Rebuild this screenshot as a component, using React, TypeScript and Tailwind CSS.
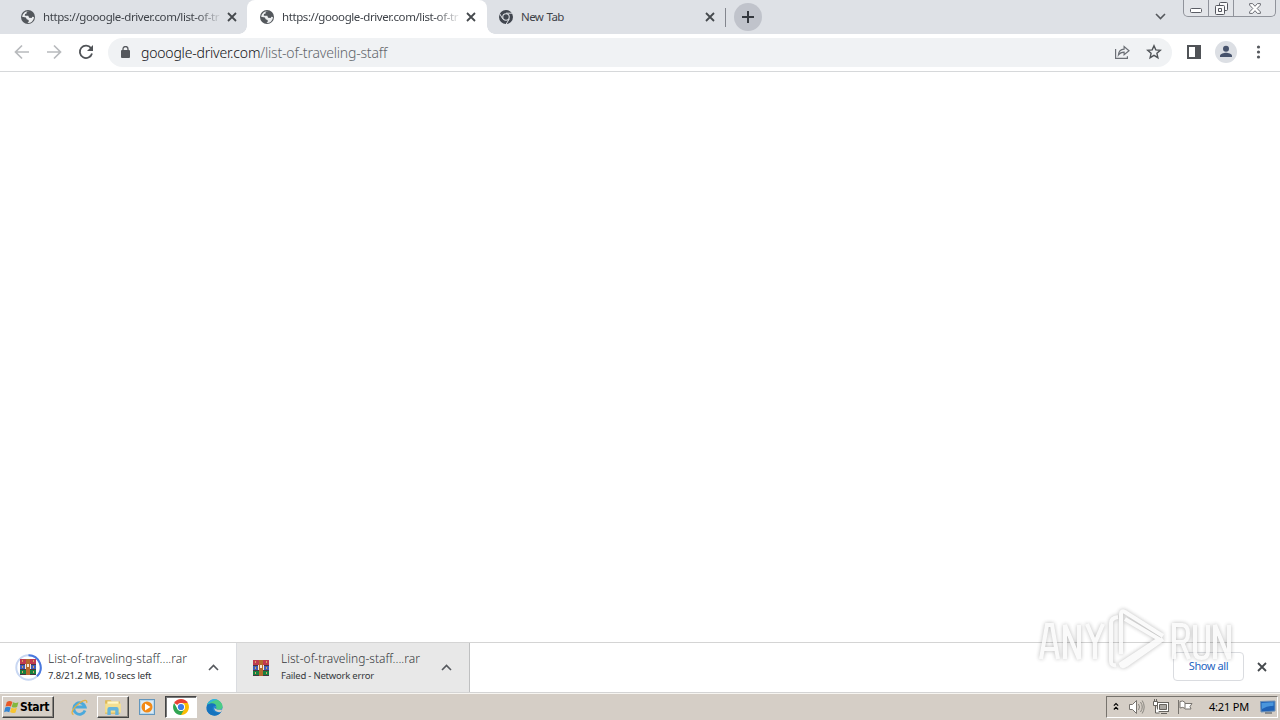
import React from 'react';

const uiFont = 'font-[Tahoma,"Noto_Sans",sans-serif]';

function Globe() {
  return (
    <svg className="size-4 shrink-0" viewBox="0 0 16 16">
      <circle cx="8" cy="8" r="7" fill="#53575c" />
      <path d="M9.2 2.3 6.7 2.7 6.6 4.4 5 5.1 4.8 6.7 8.3 6.8 9.1 8.7 11.7 9 12.3 7.8 14 7.9A6 6 0 0 1 7.5 14L8.8 12.5 8.6 10.9 6.7 10.2 5.9 8.4 2.1 7.7A6 6 0 0 1 9.2 2.3Z" fill="#eceef0" />
    </svg>
  );
}

function Close({ className = 'size-[10px]' }: { className?: string }) {
  return (
    <svg className={`${className} shrink-0`} viewBox="0 0 10 10" fill="none" stroke="#45494d" strokeWidth="1.8">
      <path d="m1 1 8 8M9 1 1 9" />
    </svg>
  );
}

function ChromeMono() {
  return (
    <svg className="size-4 shrink-0" viewBox="0 0 16 16" fill="none">
      <circle cx="8" cy="8" r="5.4" stroke="#41464f" strokeWidth="3.2" />
      <circle cx="8" cy="8" r="2.7" fill="#41464f" />
      <path d="M8 4.2h6.4M4.7 9.9 1.5 4.4M11.3 9.9 8 15.4" stroke="#dee1e6" strokeWidth="1" />
    </svg>
  );
}

function ChromeColor() {
  return (
    <svg className="size-4" viewBox="0 0 16 16">
      <path d="M8 8 1.1 4A8 8 0 0 1 14.9 4Z" fill="#e94235" />
      <path d="M8 8V4h6.9A8 8 0 0 1 8 16Z" fill="#fbbc04" />
      <path d="M8 16A8 8 0 0 1 1.1 4L4.5 10 8 12l3.4-2Z" fill="#31a552" />
      <circle cx="8" cy="8" r="4" fill="#fff" />
      <circle cx="8" cy="8" r="3.1" fill="#3d7ce8" />
    </svg>
  );
}

function Rar({ className = 'size-4' }: { className?: string }) {
  return (
    <svg className={className} viewBox="0 0 16 16" shapeRendering="crispEdges">
      <path d="M0 0h16v5H0z" fill="#c03a50" />
      <path d="M0 5h16v6H0z" fill="#405dbb" />
      <path d="M0 11h16v5H0z" fill="#16803f" />
      <path d="M0 5h16v1H0zM0 10h16v1H0zM0 15h16v1H0z" fill="#4a3440" />
      <path d="M6 0h4v16H6z" fill="#b5692d" />
      <path d="M2 1h1v2H2zM2 7h1v2H2zM2 12h1v2H2zM13 1h1v2h-1zM13 7h1v2h-1zM13 12h1v2h-1z" fill="#d9a55b" />
      <path d="M5 5h1v5H5zM10 5h1v5h-1zM7 5h2v3H7z" fill="#f5e8d4" />
    </svg>
  );
}

function Tab({ active }: { active?: boolean }) {
  return (
    <div className={`flex h-[34px] items-center pl-[12px] ${active ? 'relative w-[240px] rounded-t-lg bg-white before:absolute before:-left-2 before:bottom-0 before:size-2 before:bg-[radial-gradient(circle_at_0_0,#dee1e6_7.5px,#fff_8px)] after:absolute after:-right-2 after:bottom-0 after:size-2 after:bg-[radial-gradient(circle_at_100%_0,#dee1e6_7.5px,#fff_8px)]' : 'ml-[8px] w-[239px]'}`}>
      <Globe />
      <span className="ml-[7px] w-[178px] whitespace-nowrap text-[11.5px] tracking-[-0.41px] text-[#3f4349] [mask-image:linear-gradient(to_right,#000_86%,transparent_101%)]">https://gooogle-driver.com/list-of-tr</span>
      <Close className="ml-[6px] size-[10px]" />
    </div>
  );
}

function Window() {
  return (
    <div className="flex h-[17px] w-[93px] rounded-b-[5px] border border-t-0 border-[#90939b] bg-[#e3e5e9]">
      <div className="flex w-[25px] items-center justify-center border-r border-[#90939b]">
        <svg className="mt-[4px] h-[5px] w-3" viewBox="0 0 12 5"><rect x=".5" y=".5" width="11" height="4" rx="1" fill="#fff" stroke="#5b5d65" /></svg>
      </div>
      <div className="flex w-[25px] items-center justify-center border-r border-[#90939b]">
        <svg className="size-[13px]" viewBox="0 0 13 13" fill="#f9f9fa" stroke="#54565e"><rect x="4.5" y=".5" width="8" height="8" rx="1" /><rect x=".5" y="3.5" width="9" height="9" rx="1" /><path d="M3.5 6.5h3v3h-3z" /></svg>
      </div>
      <div className="flex flex-1 items-center justify-center">
        <svg className="h-[11px] w-3" viewBox="0 0 12 11"><path d="M.6.6h3L6 3.3 8.4.6h3v1.5L8.2 5.5l3.2 3.4v1.5h-3L6 7.7l-2.4 2.7h-3V8.9l3.2-3.4L.6 2.1Z" fill="#fff" stroke="#6b6d74" /></svg>
      </div>
    </div>
  );
}

function Chevron({ down }: { down?: boolean }) {
  return (
    <svg className="h-[7px] w-[11px] shrink-0" viewBox="0 0 11 7" fill="none" stroke="#55585d" strokeWidth="1.6">
      {down ? <path d="m1 1 4.5 4.5L10 1" /> : <path d="m1 6 4.5-4.5L10 6" />}
    </svg>
  );
}

function Toolbar() {
  return (
    <div className="flex h-[38px] items-center border-b border-[#d6d8da] bg-white">
      <svg className="mb-px ml-[14px] size-4" viewBox="0 0 16 16" fill="none" stroke="#b8babd" strokeWidth="1.7"><path d="M15 8H2M8 1.5 1.5 8 8 14.5" /></svg>
      <svg className="mb-px ml-[16px] size-4" viewBox="0 0 16 16" fill="none" stroke="#b8babd" strokeWidth="1.7"><path d="M1 8h13M8 1.5 14.5 8 8 14.5" /></svg>
      <svg className="mb-px ml-[16px] size-4" viewBox="0 0 16 16"><path d="M13 4.1A6.2 6.2 0 1 0 14 9.5" fill="none" stroke="#505357" strokeWidth="1.8" /><path d="M15 1v6H9Z" fill="#505357" /></svg>
      <div className="ml-[14px] flex h-[29px] w-[1064px] items-center rounded-full bg-[#f0f2f4] pl-[13px] pr-[10px]">
        <svg className="mb-[2px] h-3 w-[9px]" viewBox="0 0 9 12"><rect y="4" width="9" height="8" rx="1" fill="#55585d" /><path d="M2 5V3a2.5 2.5 0 0 1 5 0v2" fill="none" stroke="#55585d" strokeWidth="1.3" /></svg>
        <div className="ml-[11px] flex-1 whitespace-nowrap text-[14px] font-light tracking-[-0.19px] text-[#62666b]"><span className="text-[#101114]">gooogle-driver.com</span>/list-of-traveling-staff</div>
        <svg className="mb-px size-4" viewBox="0 0 16 16" fill="none" stroke="#6c7076" strokeWidth="1.2"><path d="M1.6 5v9.4h11.8v-2.2M4.4 11c.3-4 2.3-5.7 5.7-5.8V2.5L15 6.8l-4.9 4V8.2C7.5 8.2 5.8 9 4.4 11Z" /></svg>
        <svg className="mb-px ml-[16px] size-4" viewBox="0 0 16 16" fill="none" stroke="#505458" strokeWidth="1.4"><path d="m8 1.8 1.8 4.1 4.5.4-3.4 3 1 4.4L8 11.4l-3.9 2.3 1-4.4-3.4-3 4.5-.4Z" /></svg>
      </div>
      <svg className="mb-px ml-[15px] h-[14px] w-[14px]" viewBox="0 0 14 14"><path d="M0 0h14v14H0zM2 2v10h6V2z" fillRule="evenodd" fill="#505357" /></svg>
      <svg className="mb-px ml-[14px] size-[22px]" viewBox="0 0 22 22"><circle cx="11" cy="11" r="11" fill="#dcdfe4" /><circle cx="11" cy="7.8" r="3" fill="#47536c" /><path d="M5 16v-1.3c0-2 4-3 6-3s6 1 6 3V16Z" fill="#47536c" /></svg>
      <svg className="mb-px ml-[19px] h-4 w-[5px]" viewBox="0 0 5 16" fill="#55585d"><circle cx="2.5" cy="3" r="1.6" /><circle cx="2.5" cy="8" r="1.6" /><circle cx="2.5" cy="13" r="1.6" /></svg>
    </div>
  );
}

function Watermark() {
  return (
    <svg className="absolute left-[1037px] top-[607px] h-[70px] w-[204px] opacity-85 drop-shadow-[0_0_2px_rgba(0,0,0,.32)]" viewBox="0 0 204 70" fill="none" stroke="#fafafa">
      <g strokeWidth="4">
        <path d="m4 52 6-34h5l6 34M7 42h12M28 52V18l14 34V18M50 17l8 19 8-19M58 35v17M137 52V18h8q6 0 6 8.5t-6 8.5h-8M145 35l7 17M158 18v26q0 7 6.5 7t6.5-7V18M178 52V18l14 34V18" />
      </g>
      <path d="M81 10q-7 1-7 6v38q0 5 5 4M84 47V7q0-4 4-2l38 24M126 32 89 58q-4 3-5-1l38-25L88 12" strokeWidth="4" />
    </svg>
  );
}

function Downloads() {
  return (
    <div className="flex h-[51px] items-center border-b border-t border-[#d4d4d4] bg-white">
      <div className="flex h-full w-[237px] items-center border-r border-[#dadce0] pl-[15px]">
        <div className="mb-px grid size-[27px] place-items-center">
          <svg className="col-start-1 row-start-1 size-[27px]" viewBox="0 0 27 27" fill="none" strokeWidth="2"><circle cx="13.5" cy="13.5" r="12.2" stroke="#c8d7f2" /><path d="M13.5 1.3a12.2 12.2 0 0 1 8.5 20.9" stroke="#4978df" /></svg>
          <Rar className="col-start-1 row-start-1 mr-px size-4" />
        </div>
        <div className="ml-[6px] w-[160px] whitespace-nowrap text-[#35383c]">
          <div className="text-[12px] font-light leading-4">List-of-traveling-staff....rar</div>
          <div className="mt-px text-[9.5px] leading-4 tracking-[-0.16px] text-[#303236]">7.8/21.2 MB, 10 secs left</div>
        </div>
        <Chevron />
      </div>
      <div className="flex h-full w-[233px] items-center border-r border-[#bfc0c1] bg-[#e8e8e8] pl-[16px]">
        <Rar />
        <div className="ml-[12px] w-[160px] whitespace-nowrap text-[#35383c]">
          <div className="text-[12px] font-light leading-4">List-of-traveling-staff....rar</div>
          <div className="mt-px text-[9.5px] leading-4 tracking-[-0.22px]">Failed - Network error</div>
        </div>
        <Chevron />
      </div>
      <div className="mb-[2px] ml-auto mr-[13px] flex h-[29px] w-[71px] items-center justify-center rounded border border-[#dadce0] text-[11px] tracking-[-0.4px] text-[#2665c1]">Show all</div>
      <Close className="mb-[2px] mr-[13px] size-[10px]" />
    </div>
  );
}

const raised = 'border border-b-[#424242] border-l-white border-r-[#424242] border-t-white shadow-[inset_-1px_-1px_#8a8680]';

function Taskbar() {
  return (
    <div className="flex h-[27px] items-center border-t border-[#f7f5f1] bg-[#d5cec6] text-black">
      <div className={`ml-[2px] flex h-[22px] w-[52px] items-center gap-px pl-px ${raised}`}>
        <svg className="size-[15px] shrink-0" viewBox="0 0 16 16">
          <path d="M3 2q3-2 6 0L7.4 7Q4.5 5.8 1.6 7Z" fill="#e85926" /><path d="M9.7 2.5q2.7 1.5 5.7 0L14 7.5q-3 1.2-5.8 0Z" fill="#82b83e" /><path d="M1.3 8q3-1.4 5.8 0l-1.5 5q-3-1.3-5.5 0Z" fill="#3585d2" /><path d="M7.9 8.3q3 1.5 5.9 0l-1.5 5q-3 1.3-5.8-.4Z" fill="#f7c431" />
        </svg>
        <span className="font-['DejaVu_Sans_Condensed','DejaVu_Sans',sans-serif] text-[12px] font-bold tracking-[-0.3px]">Start</span>
      </div>
      <svg className="ml-[17px] size-[17px]" viewBox="0 0 17 17" fill="none">
        <path d="M14 11.6A5.8 5.8 0 1 1 14.2 8H4" stroke="#4ba9dc" strokeWidth="2.8" /><path d="M2.5 15.5c-4-1 1-8 6-11.5 4-3 8-4 7.2-.2" stroke="#e3b143" strokeWidth="1.3" />
      </svg>
      <div className={`ml-[9px] flex h-[22px] w-[32px] items-center justify-center ${raised}`}>
        <svg className="size-[18px]" viewBox="0 0 16 16"><path d="M1 2h5l1 1h7v11H1Z" fill="#dfb954" /><path d="M3 3h10v8H3Z" fill="#fff7c8" /><path d="M1 5h14v8H1Z" fill="#f4df91" /><path d="M3 15v-5q0-2 2-2h6q2 0 2 2v5h-3v-4H6v4Z" fill="#65b4dc" /></svg>
      </div>
      <svg className="ml-[10px] size-4" viewBox="0 0 16 16"><rect x=".5" y=".5" width="15" height="15" fill="#b8d8ed" stroke="#6296bd" /><rect x="2" y="2" width="12" height="12" fill="#dceaf3" /><circle cx="8" cy="8" r="5.5" fill="#f28a16" /><path d="m6 4.5 5.5 3.5L6 11.5Z" fill="#fff" /></svg>
      <div className="ml-[10px] flex h-[22px] w-[32px] items-center justify-center border border-b-white border-l-[#444] border-r-white border-t-[#444] bg-white shadow-[inset_1px_1px_#777]"><ChromeColor /></div>
      <svg className="ml-[9px] size-[17px]" viewBox="0 0 17 17"><circle cx="8.5" cy="8.5" r="8" fill="#1f84d2" /><path d="M1 6C3 0 12-2 16 5c2 5-2 7-6 5 1-3 0-5-4-5-2 0-4 0-5 1Z" fill="#4bcc86" /><path d="M1 6C3 0 9-1 12 1 8 1 4 3 1 6Z" fill="#31b5dc" /><path d="M1 6c4-3 9-2 9 1-3-1-4 2-3 4 2 3 5 3 8 2-3 5-11 5-14-1-1-2 0-4 0-6Z" fill="#1673bd" /><path d="M10 7c-3 1-1 5 6.5 3.5L15 13c-5 1-9-3-5-6Z" fill="#d5cec6" /></svg>

      <div className="ml-auto mr-[2px] flex h-[22px] w-[172px] items-center border border-b-white border-l-[#77736d] border-r-white border-t-[#77736d] pl-[6px]">
        <svg className="mb-[2px] h-[9px] w-[6px]" viewBox="0 0 7 10" fill="none" stroke="#000" strokeWidth="1.4"><path d="m1 4 2.5-2.5L6 4M1 8.5 3.5 6 6 8.5" /></svg>
        <svg className="ml-[10px] size-4" viewBox="0 0 16 16" fill="none" stroke="#77736e"><path d="M.5 5.5h3l4-4v13l-4-4h-3Z" fill="#fff" /><path d="M9.5 5q2 3 0 6M11.5 3q3.5 5 0 10M13.2 1.5q4 6.5 0 13" stroke="#898680" /></svg>
        <svg className="ml-[8px] size-4" viewBox="0 0 16 16" fill="none" stroke="#66635e"><rect x="4.5" y="3.5" width="11" height="9" fill="#fff" /><path d="M6.5 5.5h7v5h-7z" fill="#aaa7a2" /><path d="M8 14.5h6M.5 2.5h4v4h-4zM1.5 0v2M3.5 0v2M2.5 7v7h4" fill="#fff" /></svg>
        <svg className="ml-[8px] size-4" viewBox="0 0 16 16" fill="#fff" stroke="#77736e"><path d="M1.5 1v14M3 2.5q3-1.5 5 1v6q-2-2-5-.5ZM8 4.5h7l-2 3 1 2.5H8" /></svg>
        <span className="ml-[16px] whitespace-nowrap text-[11px] tracking-[-0.2px]">4:21 PM</span>
        <svg className="ml-auto mr-px size-4" viewBox="0 0 16 16"><path d="M.5 2.5 15 2v10l-14 1Z" fill="#1f62b6" stroke="#7192b6" /><path d="m1.5 4 12-.8v3.5Q7 7 2 10Z" fill="#4a96dc" /><path d="M5 14h7" stroke="#414a54" /></svg>
      </div>
    </div>
  );
}

export default function App() {
  return (
    <div className={`relative flex h-[720px] w-[1280px] flex-col overflow-hidden bg-white ${uiFont}`}>
      <div className="flex h-[34px] shrink-0 bg-[#dee1e6]">
        <Tab />
        <Tab active />
        <div className="flex w-[238px] items-center pl-[11px]">
          <ChromeMono />
          <span className="ml-[7px] w-[184px] text-[11.5px] tracking-[-0.6px] text-[#3f4349] [word-spacing:1px]">New Tab</span>
          <Close />
        </div>
        <div className="mt-[8px] h-[19px] w-px bg-[#83868e]" />
        <div className="ml-[8px] mt-[3px] flex size-[28px] items-center justify-center rounded-full bg-[#c0c3cb]">
          <svg className="size-3" viewBox="0 0 12 12" stroke="#34383e" strokeWidth="2"><path d="M6 0v12M0 6h12" /></svg>
        </div>
        <div className="ml-auto mr-[17px] mt-[13px]"><Chevron down /></div>
        <div className="mr-[4px]"><Window /></div>
      </div>
      <Toolbar />
      <main className="min-h-0 flex-1 bg-white" />
      <Downloads />
      <Taskbar />
      <Watermark />
    </div>
  );
}
